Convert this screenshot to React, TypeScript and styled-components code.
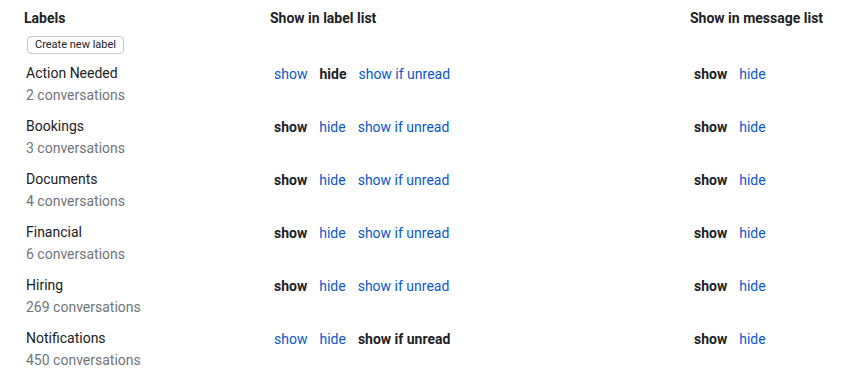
import React, { useState } from 'react';
import styled, { createGlobalStyle } from 'styled-components';

const GlobalStyle = createGlobalStyle`
  body {
    margin: 0;
    background: #fff;
    font-family: Roboto, "Liberation Sans", Arial, sans-serif;
    color: #202124;
  }
`;

const Page = styled.div`
  padding: 10px 0 0 24px;
`;

const Row = styled.div`
  display: grid;
  grid-template-columns: 246px 420px 1fr;
  align-items: start;
`;

const HeaderRow = styled(Row)`
  padding-bottom: 8px;
`;

const HeadCell = styled.div`
  font-size: 14px;
  font-weight: 700;
  line-height: 16px;
`;

const CreateButton = styled.button`
  display: block;
  margin: 10px 0 0 3px;
  height: 18px;
  padding: 0 7px;
  border: 1px solid #c4c7c5;
  border-radius: 4px;
  background: #fff;
  font-family: Roboto, "Liberation Sans", Arial, sans-serif;
  font-size: 11px;
  color: #202124;
  line-height: 16px;
  cursor: pointer;
`;

const LabelRow = styled(Row)`
  padding-bottom: 9px;
`;

const NameCell = styled.div`
  padding-left: 2px;
  font-size: 14px;
  line-height: 22px;
`;

const Count = styled.div`
  color: #70757a;
`;

const OptionCell = styled.div`
  display: flex;
  gap: 12px;
  padding: 1px 0 0 4px;
  font-size: 14px;
  line-height: 22px;
`;

const Option = styled.span<{ $active: boolean }>`
  color: ${(p) => (p.$active ? '#202124' : '#0b57d0')};
  font-weight: ${(p) => (p.$active ? 700 : 400)};
  cursor: ${(p) => (p.$active ? 'default' : 'pointer')};
`;

type LabelVis = 'show' | 'hide' | 'show if unread';
type MsgVis = 'show' | 'hide';

interface Label {
  name: string;
  count: number;
  list: LabelVis;
  message: MsgVis;
}

const initial: Label[] = [
  { name: 'Action Needed', count: 2, list: 'hide', message: 'show' },
  { name: 'Bookings', count: 3, list: 'show', message: 'show' },
  { name: 'Documents', count: 4, list: 'show', message: 'show' },
  { name: 'Financial', count: 6, list: 'show', message: 'show' },
  { name: 'Hiring', count: 269, list: 'show', message: 'show' },
  { name: 'Notifications', count: 450, list: 'show if unread', message: 'show' },
];

const listOptions: LabelVis[] = ['show', 'hide', 'show if unread'];
const msgOptions: MsgVis[] = ['show', 'hide'];

const App: React.FC = () => {
  const [labels, setLabels] = useState(initial);

  const update = (i: number, patch: Partial<Label>) => {
    setLabels(labels.map((l, j) => (j === i ? { ...l, ...patch } : l)));
  };

  return (
    <Page>
      <GlobalStyle />
      <HeaderRow>
        <div>
          <HeadCell>Labels</HeadCell>
          <CreateButton>Create new label</CreateButton>
        </div>
        <HeadCell>Show in label list</HeadCell>
        <HeadCell>Show in message list</HeadCell>
      </HeaderRow>
      {labels.map((l, i) => (
        <LabelRow key={l.name}>
          <NameCell>
            {l.name}
            <Count>{l.count} conversations</Count>
          </NameCell>
          <OptionCell>
            {listOptions.map((o) => (
              <Option key={o} $active={l.list === o} onClick={() => update(i, { list: o })}>
                {o}
              </Option>
            ))}
          </OptionCell>
          <OptionCell>
            {msgOptions.map((o) => (
              <Option key={o} $active={l.message === o} onClick={() => update(i, { message: o })}>
                {o}
              </Option>
            ))}
          </OptionCell>
        </LabelRow>
      ))}
    </Page>
  );
};

export default App;
